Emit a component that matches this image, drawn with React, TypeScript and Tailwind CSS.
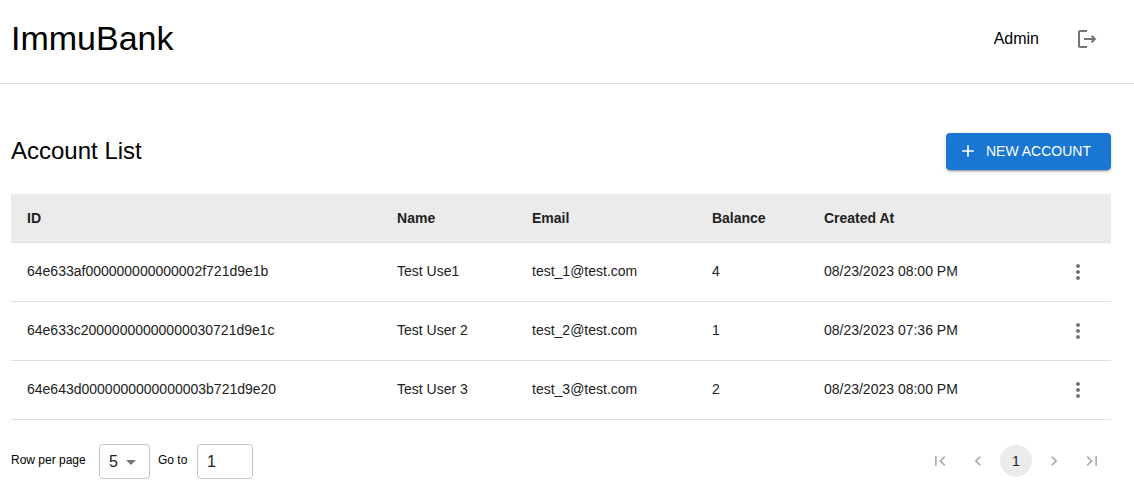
import { useState } from "react";
import {
  MdAdd,
  MdArrowDropDown,
  MdChevronLeft,
  MdChevronRight,
  MdFirstPage,
  MdLastPage,
  MdMoreVert,
} from "react-icons/md";

type Account = {
  id: string;
  name: string;
  email: string;
  balance: number;
  createdAt: string;
};

const accounts: Account[] = [
  { id: "64e633af000000000000002f721d9e1b", name: "Test Use1", email: "test_1@test.com", balance: 4, createdAt: "08/23/2023 08:00 PM" },
  { id: "64e633c20000000000000030721d9e1c", name: "Test User 2", email: "test_2@test.com", balance: 1, createdAt: "08/23/2023 07:36 PM" },
  { id: "64e643d0000000000000003b721d9e20", name: "Test User 3", email: "test_3@test.com", balance: 2, createdAt: "08/23/2023 08:00 PM" },
];

function LogoutIcon() {
  return (
    <svg viewBox="0 0 24 24" className="size-6" aria-hidden="true">
      <path fill="currentColor" d="M5 5h7V3H5c-1.1 0-2 .9-2 2v14c0 1.1.9 2 2 2h7v-2H5V5z" />
      <path fill="none" stroke="currentColor" strokeWidth="2" d="M9 12h10.6M16.6 8.7l3.3 3.3-3.3 3.3" />
    </svg>
  );
}

function Header() {
  return (
    <header className="flex h-[84px] items-center justify-between border-b border-[#e0e0e0] pr-[27px] pb-[7px] pl-[11px]">
      <h1 className="text-[34px] leading-[42px]">ImmuBank</h1>
      <div className="flex items-center gap-7 pt-0.5">
        <span className="text-base">Admin</span>
        <button type="button" aria-label="Log out" className="rounded-full p-2 text-[#757575]">
          <LogoutIcon />
        </button>
      </div>
    </header>
  );
}

function AccountTable() {
  return (
    <table className="mt-6 w-full table-fixed border-separate border-spacing-0 text-left text-sm text-[#212121]">
      <colgroup>
        <col className="w-[33.64%]" />
        <col className="w-[12.27%]" />
        <col className="w-[16.36%]" />
        <col className="w-[10.18%]" />
        <col className="w-[18.55%]" />
        <col className="w-[9%]" />
      </colgroup>
      <thead>
        <tr className="h-[49px] bg-[#ebebeb]">
          {["ID", "Name", "Email", "Balance", "Created At"].map((title) => (
            <th key={title} scope="col" className="border-b border-[#e0e0e0] px-4 font-bold">
              {title}
            </th>
          ))}
          <td className="border-b border-[#e0e0e0]" />
        </tr>
      </thead>
      <tbody>
        {accounts.map((account) => (
          <tr key={account.id} className="h-[59px] *:border-b *:border-[#e0e0e0] *:px-4">
            <td className="pb-0.5">{account.id}</td>
            <td className="pb-0.5">{account.name}</td>
            <td className="pb-0.5">{account.email}</td>
            <td className="pb-0.5">{account.balance}</td>
            <td className="pb-0.5">{account.createdAt}</td>
            <td>
              <button
                type="button"
                aria-label={`Actions for ${account.name}`}
                className="ml-auto block rounded-full p-[5px] text-[#757575]"
              >
                <MdMoreVert size={24} />
              </button>
            </td>
          </tr>
        ))}
      </tbody>
    </table>
  );
}

function TableFooter() {
  const [rows, setRows] = useState("5");
  const [page, setPage] = useState("1");
  const arrow = "flex size-8 items-center justify-center rounded-full text-[#acacac]";

  return (
    <footer className="flex items-center justify-between pt-6">
      <div className="flex items-center gap-2">
        <label htmlFor="rows" className="w-20 pb-1 text-xs whitespace-nowrap">
          Row per page
        </label>
        <div className="grid w-[51px] items-center">
          <select
            id="rows"
            value={rows}
            onChange={(event) => setRows(event.target.value)}
            className="col-start-1 row-start-1 h-[35px] w-full appearance-none rounded border border-[#c4c4c4] bg-white pl-[9px] text-base text-[#212121]"
          >
            <option>5</option>
            <option>10</option>
            <option>25</option>
          </select>
          <MdArrowDropDown
            size={24}
            className="pointer-events-none col-start-1 row-start-1 mr-[7px] justify-self-end text-[#757575]"
          />
        </div>
        <label htmlFor="page" className="w-[31px] pb-1 text-xs whitespace-nowrap">
          Go to
        </label>
        <input
          id="page"
          type="text"
          inputMode="numeric"
          value={page}
          onChange={(event) => setPage(event.target.value)}
          className="h-[35px] w-14 rounded border border-[#c4c4c4] px-[9px] text-base text-[#212121]"
        />
      </div>
      <nav aria-label="Pagination" className="flex gap-1.5 pr-[3px] pb-0.5">
        <button type="button" disabled aria-label="First page" className={arrow}>
          <MdFirstPage size={20} />
        </button>
        <button type="button" disabled aria-label="Previous page" className={arrow}>
          <MdChevronLeft size={20} />
        </button>
        <button
          type="button"
          aria-current="page"
          className="flex size-8 items-center justify-center rounded-full bg-[#ebebeb] text-sm text-[#212121]"
        >
          1
        </button>
        <button type="button" disabled aria-label="Next page" className={arrow}>
          <MdChevronRight size={20} />
        </button>
        <button type="button" disabled aria-label="Last page" className={arrow}>
          <MdLastPage size={20} />
        </button>
      </nav>
    </footer>
  );
}

export default function App() {
  return (
    <div className="min-h-screen bg-white font-['Liberation_Sans',Arial,sans-serif] text-black">
      <Header />
      <main className="pt-[49px] pr-[23px] pl-[11px]">
        <div className="flex items-center justify-between">
          <h2 className="pb-0.5 text-2xl">Account List</h2>
          <button
            type="button"
            className="flex h-[37px] min-w-[165px] items-center gap-2 rounded bg-[#1976d2] pr-4 pb-0.5 pl-3 text-sm text-white shadow-[0_3px_1px_-2px_rgba(0,0,0,0.2),0_2px_2px_0_rgba(0,0,0,0.14),0_1px_5px_0_rgba(0,0,0,0.12)]"
          >
            <MdAdd size={20} />
            NEW ACCOUNT
          </button>
        </div>
        <AccountTable />
        <TableFooter />
      </main>
    </div>
  );
}
